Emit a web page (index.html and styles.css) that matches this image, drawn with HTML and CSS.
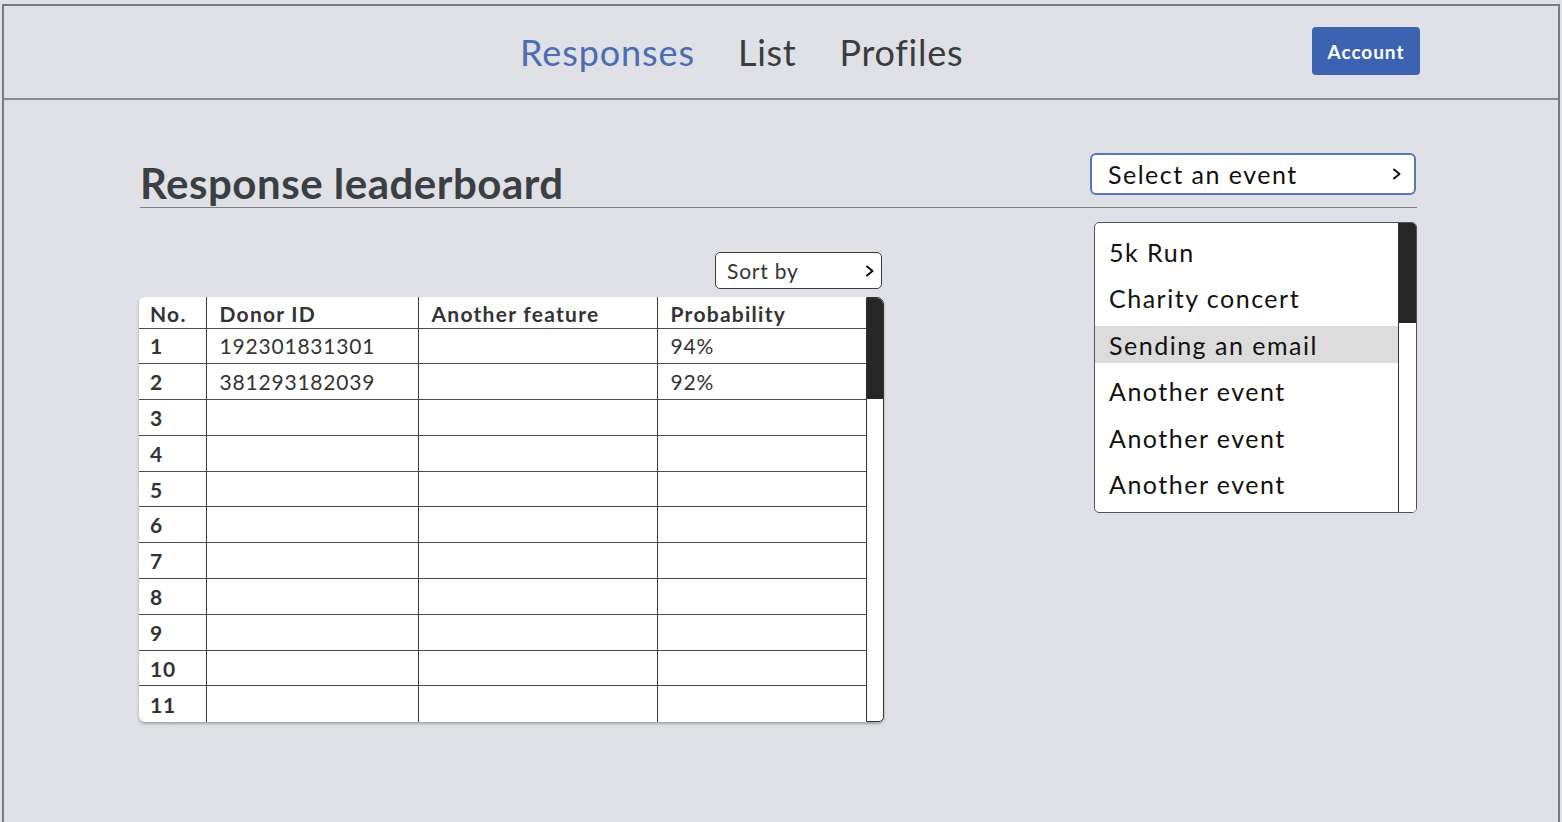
FILE: index.html
```html
<!DOCTYPE html>
<html lang="en">
<head>
<meta charset="utf-8">
<title>Response leaderboard</title>
<link rel="stylesheet" href="styles.css">
</head>
<body>
<div class="frame">
  <header class="topbar">
    <nav class="nav">
      <a class="nav-link active" href="#">Responses</a>
      <a class="nav-link" href="#">List</a>
      <a class="nav-link" href="#">Profiles</a>
    </nav>
    <button class="account">Account</button>
  </header>
  <main class="main">
    <div class="title-row">
      <h1 class="title">Response leaderboard</h1>
      <div class="select">
        <span>Select an event</span>
        <svg class="chev" width="10" height="14" viewBox="0 0 10 14"><path d="M2 2.5 L7.5 7 L2 11.5" fill="none" stroke="#111" stroke-width="2" stroke-linecap="round" stroke-linejoin="round"/></svg>
      </div>
    </div>
    <div class="content">
      <section class="board">
        <div class="sort-row">
          <div class="sort">
            <span>Sort by</span>
            <svg class="chev" width="10" height="14" viewBox="0 0 10 14"><path d="M2 2.5 L7.5 7 L2 11.5" fill="none" stroke="#111" stroke-width="2" stroke-linecap="round" stroke-linejoin="round"/></svg>
          </div>
        </div>
        <div class="card">
          <table class="grid">
            <thead>
              <tr><th class="c1">No.</th><th class="c2">Donor ID</th><th class="c3">Another feature</th><th class="c4">Probability</th></tr>
            </thead>
            <tbody>
              <tr><td>1</td><td>192301831301</td><td></td><td>94%</td></tr>
              <tr><td>2</td><td>381293182039</td><td></td><td>92%</td></tr>
              <tr><td>3</td><td></td><td></td><td></td></tr>
              <tr><td>4</td><td></td><td></td><td></td></tr>
              <tr><td>5</td><td></td><td></td><td></td></tr>
              <tr><td>6</td><td></td><td></td><td></td></tr>
              <tr><td>7</td><td></td><td></td><td></td></tr>
              <tr><td>8</td><td></td><td></td><td></td></tr>
              <tr><td>9</td><td></td><td></td><td></td></tr>
              <tr><td>10</td><td></td><td></td><td></td></tr>
              <tr><td>11</td><td></td><td></td><td></td></tr>
            </tbody>
          </table>
          <div class="scroll table-scroll"><div class="thumb"></div></div>
        </div>
      </section>
      <aside class="events">
        <ul class="event-list">
          <li class="event">5k Run</li>
          <li class="event">Charity concert</li>
          <li class="event selected">Sending an email</li>
          <li class="event">Another event</li>
          <li class="event">Another event</li>
          <li class="event">Another event</li>
        </ul>
        <div class="scroll list-scroll"><div class="thumb"></div></div>
      </aside>
    </div>
  </main>
</div>
</body>
</html>
```

FILE: styles.css
```css
* { box-sizing: border-box; }
html, body { margin: 0; padding: 0; background: #e0e1e6; }
body { font-family: Lato, "Noto Sans", sans-serif; color: #333; letter-spacing: 0.05em; }

.frame {
  margin: 4px 0 0 2px;
  width: 1558px;
  height: 818px;
  border-top: 2px solid #7a7b7e;
  border-left: 2px solid #7a7b7e;
  border-right: 2px solid #7a7b7e;
  background: #e0e1e6;
}

.topbar {
  height: 94px;
  border-bottom: 2px solid #8a8b8e;
  display: flex;
  align-items: center;
  justify-content: space-between;
  padding: 0 138px 0 516px;
}
.nav { display: flex; gap: 43px; align-items: center; margin-top: 0; }
.nav-link {
  font-size: 36px;
  letter-spacing: 0.02em;
  color: #3a3d40;
  text-decoration: none;
}
.nav-link.active { color: #4a6db3; letter-spacing: 0.025em; }
.account {
  width: 108px;
  height: 48px;
  border: 0;
  border-radius: 4px;
  background: #3b63b1;
  color: #fff;
  font-family: inherit;
  font-size: 19px;
  letter-spacing: 0.05em;
  font-weight: 700;
  margin-top: -2px;
}

.main { padding: 53px 0 0 136px; }
.title-row {
  width: 1277px;
  display: flex;
  justify-content: space-between;
  align-items: flex-end;
  border-bottom: 1px solid #7d7e82;
}
.title {
  margin: 0 0 4px 0;
  font-size: 42px;
  line-height: 40px;
  font-weight: 700;
  letter-spacing: 0.012em;
  color: #3a3f44;
}
.select {
  width: 326px;
  height: 42px;
  margin: 0 1px 12px 0;
  background: #fff;
  border: 2px solid #5a77b3;
  border-radius: 6px;
  display: flex;
  align-items: center;
  justify-content: space-between;
  padding: 0 12px 0 16px;
  font-size: 25px;
  letter-spacing: 0.06em;
  color: #111;
}

.content {
  width: 1277px;
  display: flex;
  justify-content: space-between;
  align-items: flex-start;
  margin-top: 14px;
}
.board { width: 745px; margin-left: -1px; margin-top: 30px; }
.sort-row { display: flex; justify-content: flex-end; padding-right: 2px; }
.sort {
  width: 167px;
  height: 37px;
  background: #fff;
  border: 1.5px solid #3a3a3a;
  border-radius: 5px;
  display: flex;
  align-items: center;
  justify-content: space-between;
  padding: 0 6px 0 11px;
  font-size: 21px;
  color: #333;
}

.card {
  margin-top: 8px;
  display: flex;
  background: #fff;
  border-radius: 6px;
  box-shadow: 0 2px 3px rgba(0,0,0,0.28);
}
.grid {
  border-collapse: collapse;
  width: 727px;
  table-layout: fixed;
}
.grid th, .grid td {
  text-align: left;
  padding: 0 0 0 13px;
  border-right: 1.5px solid #3c3c3c;
  border-bottom: 1.5px solid #4a4a4a;
  font-size: 21px;
  color: #333;
}
.grid th:last-child, .grid td:last-child { border-right: 0; }
.grid tbody tr:last-child td { border-bottom: 0; }
.grid th { font-weight: 700; height: 31px; padding-top: 3px; letter-spacing: 0.06em; }
.grid td { height: 35.8px; }
.grid th:first-child, .grid td:first-child { padding-left: 11px; font-weight: 700; }
.c1 { width: 67px; }
.c2 { width: 212px; }
.c3 { width: 239px; }
.c4 { width: 209px; }

.scroll {
  width: 18px;
  background: #fff;
  border: 1.5px solid #333;
}
.thumb { background: #262626; }
.table-scroll {
  border-radius: 0 7px 5px 0;
  overflow: hidden;
}
.table-scroll .thumb { height: 101px; }

.events {
  width: 323px;
  height: 291px;
  display: flex;
  background: #fff;
  border: 1.5px solid #555;
  border-radius: 5px;
  overflow: hidden;
}
.event-list {
  list-style: none;
  margin: 0;
  padding: 10px 0 0 0;
  flex: 1;
}
.event {
  height: 37px;
  margin-bottom: 9.5px;
  display: flex;
  align-items: center;
  padding-left: 14px;
  font-size: 25px;
  letter-spacing: 0.06em;
  color: #111;
}
.event.selected { background: #dcdcdc; }
.list-scroll {
  border-width: 0 0 0 1.5px;
}
.list-scroll .thumb { height: 100px; }
```
